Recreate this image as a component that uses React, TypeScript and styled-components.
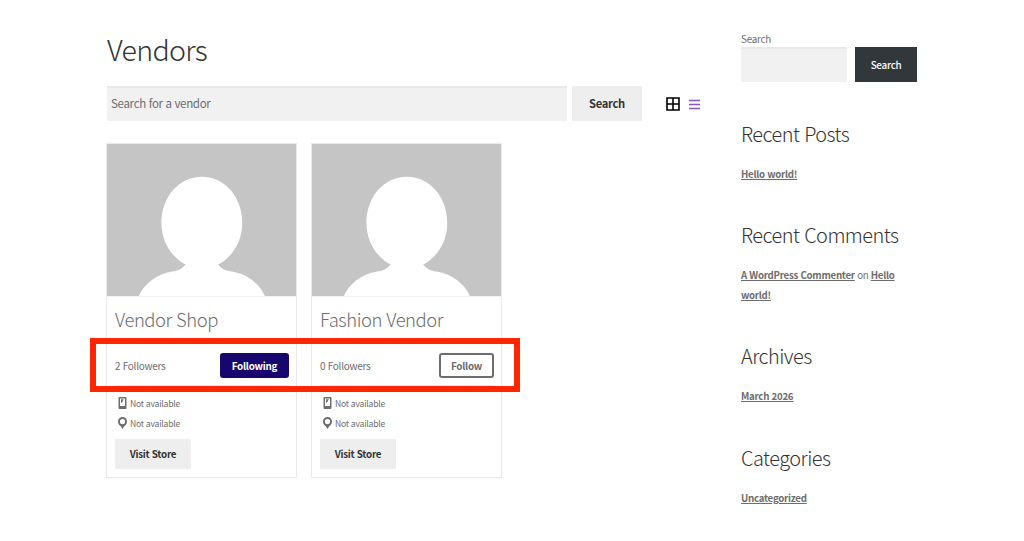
import * as React from "react";
import styled, { createGlobalStyle } from "styled-components";

const GlobalStyle = createGlobalStyle`
  * {
    box-sizing: border-box;
    letter-spacing: -0.026em;
    word-spacing: 0.04em;
  }
  body {
    margin: 0;
    background: #fff;
    color: #6d6d6d;
    font-family: "Noto Sans CJK JP", "Noto Sans", sans-serif;
    font-size: 10px;
  }
`;

const Page = styled.div`
  display: flex;
  gap: 39px;
  width: 1024px;
  height: 541px;
  padding: 32px 107px 0;
  overflow: hidden;
`;

const Main = styled.main`
  width: 595px;
`;

const PageTitle = styled.h1`
  margin: 0 0 21px;
  color: #333;
  font-size: 28.6px;
  font-weight: 300;
  line-height: 33px;
`;

const SearchBar = styled.div`
  display: flex;
  align-items: center;
  height: 35px;
  margin-bottom: 22px;
`;

const SearchInput = styled.input<{ $width: number }>`
  width: ${props => props.$width}px;
  height: 35px;
  padding: 0 4px 1px;
  border: 0;
  border-radius: 0;
  background: #f1f1f1;
  box-shadow: inset 0 2px 0 #e8e8e8;
  font: 400 11.5px "Noto Sans CJK JP", sans-serif;

  &::placeholder {
    color: #6d6d6d;
  }
`;

const Button = styled.button`
  padding: 0;
  border: 0;
  background: #eee;
  color: #333;
  font-family: inherit;
  font-weight: 700;
`;

const VendorSearchButton = styled(Button)`
  width: 70px;
  height: 35px;
  margin: 0 24px 0 5px;
  padding-bottom: 1px;
  font-size: 11.2px;
`;

const ViewToggle = styled.div`
  display: flex;
  align-items: center;
  gap: 9px;
  padding-top: 1px;

  svg {
    display: block;
  }
`;

const CardGrid = styled.div`
  position: relative;
  display: flex;
  gap: 14px;
  margin-left: -1px;
`;

const Card = styled.article`
  width: 191px;
  height: 335px;
  border: 1px solid #e9e9e9;
`;

const Avatar = styled.svg`
  display: block;
  width: 189px;
  height: 153px;
  border-bottom: 1px solid #f1f1f1;
`;

const CardBody = styled.div`
  padding: 0 7px 0 8px;
`;

const VendorName = styled.h2`
  margin: 0;
  padding-top: 9px;
  font-size: 18.5px;
  font-weight: 300;
  line-height: 27px;
`;

const FollowRow = styled.div`
  display: flex;
  align-items: center;
  justify-content: space-between;
  height: 40px;
  margin-top: 13px;
  border-bottom: 1px solid #eee;
  font-size: 10px;
`;

const FollowButton = styled(Button)<{ $following: boolean }>`
  width: ${props => (props.$following ? 69 : 55)}px;
  height: 25px;
  border: 2px solid ${props => (props.$following ? "#17066d" : "#6d6d6d")};
  border-radius: 3px;
  background: ${props => (props.$following ? "#17066d" : "#fff")};
  color: ${props => (props.$following ? "#fff" : "#6d6d6d")};
  font-size: 9.9px;
`;

const ContactList = styled.ul`
  margin: 7px 0 6px;
  padding: 0 0 0 3px;
  list-style: none;
`;

const ContactItem = styled.li`
  display: flex;
  align-items: center;
  gap: 3px;
  height: 20px;
  font-size: 8.6px;
`;

const VisitButton = styled(Button)`
  display: block;
  width: 76px;
  height: 30px;
  padding-bottom: 1px;
  font-size: 9.8px;
`;

const Highlight = styled.div`
  position: absolute;
  top: 195px;
  left: -16px;
  width: 430px;
  height: 54px;
  border: 6px solid #ff2600;
`;

const Sidebar = styled.aside`
  width: 176px;
`;

const SearchLabel = styled.label`
  display: block;
  height: 15px;
  font-size: 9.9px;
  line-height: 14px;
`;

const SidebarSearch = styled.div`
  display: flex;
  gap: 8px;
  margin-bottom: 38px;
`;

const SidebarButton = styled(Button)`
  width: 62px;
  height: 35px;
  background: #32373c;
  color: #fff;
  font-size: 9.9px;
  font-weight: 500;
`;

const Widget = styled.section`
  margin-bottom: 37px;
`;

const WidgetTitle = styled.h2`
  margin: 0 0 18px;
  color: #333;
  font-size: 19.9px;
  font-weight: 300;
  line-height: 27px;
`;

const WidgetText = styled.p`
  margin: 0;
  font-size: 9.7px;
  line-height: 19.4px;
`;

const Link = styled.a`
  color: #6d6d6d;
  font-weight: 700;
  text-decoration: underline;
  text-decoration-thickness: 1px;
  text-underline-offset: 1px;
`;

interface Vendor {
  name: string;
  followers: number;
  following: boolean;
}

const vendors: Vendor[] = [
  { name: "Vendor Shop", followers: 2, following: true },
  { name: "Fashion Vendor", followers: 0, following: false }
];

const GridIcon = () => (
  <svg width="14" height="14" viewBox="0 0 14 14">
    <path
      d="M1 1h12v12H1zM7 1v12M1 7h12"
      fill="none"
      stroke="#000"
      strokeWidth="1.6"
    />
  </svg>
);

const ListIcon = () => (
  <svg width="11" height="11" viewBox="0 0 11 11">
    <path d="M0 1.5h11M0 5.5h11M0 9.5h11" stroke="#8b56c6" strokeWidth="1.7" />
  </svg>
);

const PhoneIcon = () => (
  <svg width="9" height="12" viewBox="0 0 9 12">
    <path
      fill="#6d6d6d"
      fillRule="evenodd"
      d="M1.5 0h6q1 0 1 1v10q0 1-1 1h-6q-1 0-1-1V1q0-1 1-1zM2 1.5v7.5h5V1.5z"
    />
    <path fill="#6d6d6d" d="M3 2.3h2.8L3.9 5.7H3z" />
  </svg>
);

const PinIcon = () => (
  <svg width="9" height="12" viewBox="0 0 9 12">
    <path
      fill="#6d6d6d"
      fillRule="evenodd"
      d="M4.5 0A4.5 4.5 0 0 1 9 4.6C9 7 7.5 8.5 6.2 9.2L4.5 12 2.8 9.2C1.5 8.5 0 7 0 4.6A4.5 4.5 0 0 1 4.5 0zM4.5 2a2.6 2.6 0 1 0 0 5.2 2.6 2.6 0 0 0 0-5.2z"
    />
  </svg>
);

const VendorCard = ({ name, followers, following }: Vendor) => (
  <Card>
    <Avatar viewBox="0 0 190 152" preserveAspectRatio="none">
      <path fill="#c5c5c5" d="M0 0h190v152H0z" />
      <path
        fill="#fff"
        d="M95.4 32.8C72.4 32.8 54.7 53 54.7 79C54.7 97 64.4 113 79 120.5C75.4 125 71.4 127 65.4 127.5C49.4 130 37.4 140 32 152H158.7C153.4 140 141.4 130 125.4 127.5C119.4 127 115.4 125 111.7 120.5C126.4 113 136 97 136 79C136 53 118.4 32.8 95.4 32.8z"
      />
    </Avatar>
    <CardBody>
      <VendorName>{name}</VendorName>
      <FollowRow>
        <span>{followers} Followers</span>
        <FollowButton $following={following}>
          {following ? "Following" : "Follow"}
        </FollowButton>
      </FollowRow>
      <ContactList>
        <ContactItem>
          <PhoneIcon />
          Not available
        </ContactItem>
        <ContactItem>
          <PinIcon />
          Not available
        </ContactItem>
      </ContactList>
      <VisitButton>Visit Store</VisitButton>
    </CardBody>
  </Card>
);

export default function App() {
  return (
    <>
      <GlobalStyle />
      <Page>
        <Main>
          <PageTitle>Vendors</PageTitle>
          <SearchBar>
            <SearchInput $width={460} placeholder="Search for a vendor" />
            <VendorSearchButton>Search</VendorSearchButton>
            <ViewToggle>
              <GridIcon />
              <ListIcon />
            </ViewToggle>
          </SearchBar>
          <CardGrid>
            {vendors.map(vendor => (
              <VendorCard key={vendor.name} {...vendor} />
            ))}
            <Highlight />
          </CardGrid>
        </Main>
        <Sidebar>
          <SearchLabel htmlFor="site-search">Search</SearchLabel>
          <SidebarSearch>
            <SearchInput id="site-search" $width={106} />
            <SidebarButton>Search</SidebarButton>
          </SidebarSearch>
          <Widget>
            <WidgetTitle>Recent Posts</WidgetTitle>
            <WidgetText>
              <Link>Hello world!</Link>
            </WidgetText>
          </Widget>
          <Widget>
            <WidgetTitle>Recent Comments</WidgetTitle>
            <WidgetText>
              <Link>A WordPress Commenter</Link> on <Link>Hello world!</Link>
            </WidgetText>
          </Widget>
          <Widget>
            <WidgetTitle>Archives</WidgetTitle>
            <WidgetText>
              <Link>March 2026</Link>
            </WidgetText>
          </Widget>
          <Widget>
            <WidgetTitle>Categories</WidgetTitle>
            <WidgetText>
              <Link>Uncategorized</Link>
            </WidgetText>
          </Widget>
        </Sidebar>
      </Page>
    </>
  );
}
